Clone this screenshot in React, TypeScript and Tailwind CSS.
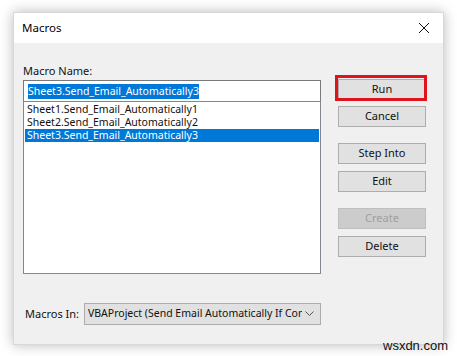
import React from 'react';

const items = [
  'Sheet1.Send_Email_Automatically1',
  'Sheet2.Send_Email_Automatically2',
  'Sheet3.Send_Email_Automatically3',
];

function Btn({ label, disabled, className = '' }: { label: string; disabled?: boolean; className?: string }) {
  return (
    <div
      className={`flex h-[21px] w-[88px] items-center justify-center border text-[11px] ${
        disabled ? 'border-[#bfbfbf] bg-[#cccccc] text-[#a0a0a0]' : 'border-[#adadad] bg-[#e1e1e1] text-[#111]'
      } ${className}`}
    >
      {label}
    </div>
  );
}

export default function App() {
  return (
    <div className="relative h-[356px] w-[457px] overflow-hidden bg-white pl-[13px] pt-[12px]" style={{ fontFamily: '"Noto Sans", sans-serif' }}>
      <div className="flex h-[333px] w-[431px] flex-col border border-[#d8d8d8] bg-[#f0f0f0] shadow-[0_0_12px_rgba(0,0,0,0.28)]">
        {/* title bar */}
        <div className="flex h-[30px] shrink-0 items-center justify-between bg-white pl-[8px] pr-[10px]">
          <span className="text-[11.5px] text-black">Macros</span>
          <svg width="12" height="12" viewBox="0 0 12 12" className="mr-[3px]">
            <path d="M1 1L11 11M11 1L1 11" stroke="#111" strokeWidth="1" />
          </svg>
        </div>

        <div className="flex flex-1 flex-col">
          <div className="flex">
            {/* left column */}
            <div className="ml-[9px] w-[298px]">
              <div className="mt-[20px] h-[16px] text-[11px] leading-[16px] text-[#111]">Macro Name:</div>
              <div className="mt-[1px] flex h-[22px] items-center border border-[#7a7a7a] bg-white pl-[4px]">
                <span className="bg-[#0078d7] text-[10.5px] leading-[15px] text-white">{items[2]}</span>
              </div>
              <div className="-mt-px h-[173px] border border-[#828790] bg-white px-px pt-px">
                {items.map((it, i) => (
                  <div
                    key={it}
                    className={`h-[13px] pl-[2px] text-[10.5px] leading-[13px] ${
                      i === 2 ? 'bg-[#0078d7] text-white' : 'text-[#111]'
                    }`}
                  >
                    {it}
                  </div>
                ))}
              </div>
            </div>

            {/* right column */}
            <div className="ml-[17px] flex flex-col pt-[36px]">
              <Btn label="Run" />
              <Btn label="Cancel" className="mt-[6px]" />
              <Btn label="Step Into" className="mt-[16px]" />
              <Btn label="Edit" className="mt-[7px]" />
              <Btn label="Create" disabled className="mt-[16px]" />
              <Btn label="Delete" className="mt-[7px]" />
            </div>
          </div>

          {/* macros in */}
          <div className="ml-[11px] mt-[29px] flex items-center">
            <span className="w-[59px] whitespace-nowrap text-[11px] text-[#111]">Macros In:</span>
            <div className="flex h-[22px] w-[237px] items-center justify-between border border-[#adadad] bg-[#e1e1e1] pl-[3px] pr-[6px]">
              <span className="w-[214px] overflow-hidden whitespace-nowrap text-[10.5px] text-[#111]">
                VBAProject (Send Email Automatically If Condition Met.xlsm)
              </span>
              <svg width="9" height="6" viewBox="0 0 9 6">
                <path d="M0.5 0.5L4.5 4.5L8.5 0.5" stroke="#555" strokeWidth="1" fill="none" />
              </svg>
            </div>
          </div>
        </div>
      </div>

      {/* red highlight annotation around Run */}
      <div className="absolute left-[335px] top-[75px] h-[26px] w-[92px] border-[3px] border-[#e0131c]" />

      {/* watermark */}
      <div
        className="absolute left-[383px] top-[338px] text-[13px] leading-[15px] text-[#111]"
        style={{ fontFamily: '"Liberation Sans", sans-serif' }}
      >
        wsxdn.com
      </div>
    </div>
  );
}
